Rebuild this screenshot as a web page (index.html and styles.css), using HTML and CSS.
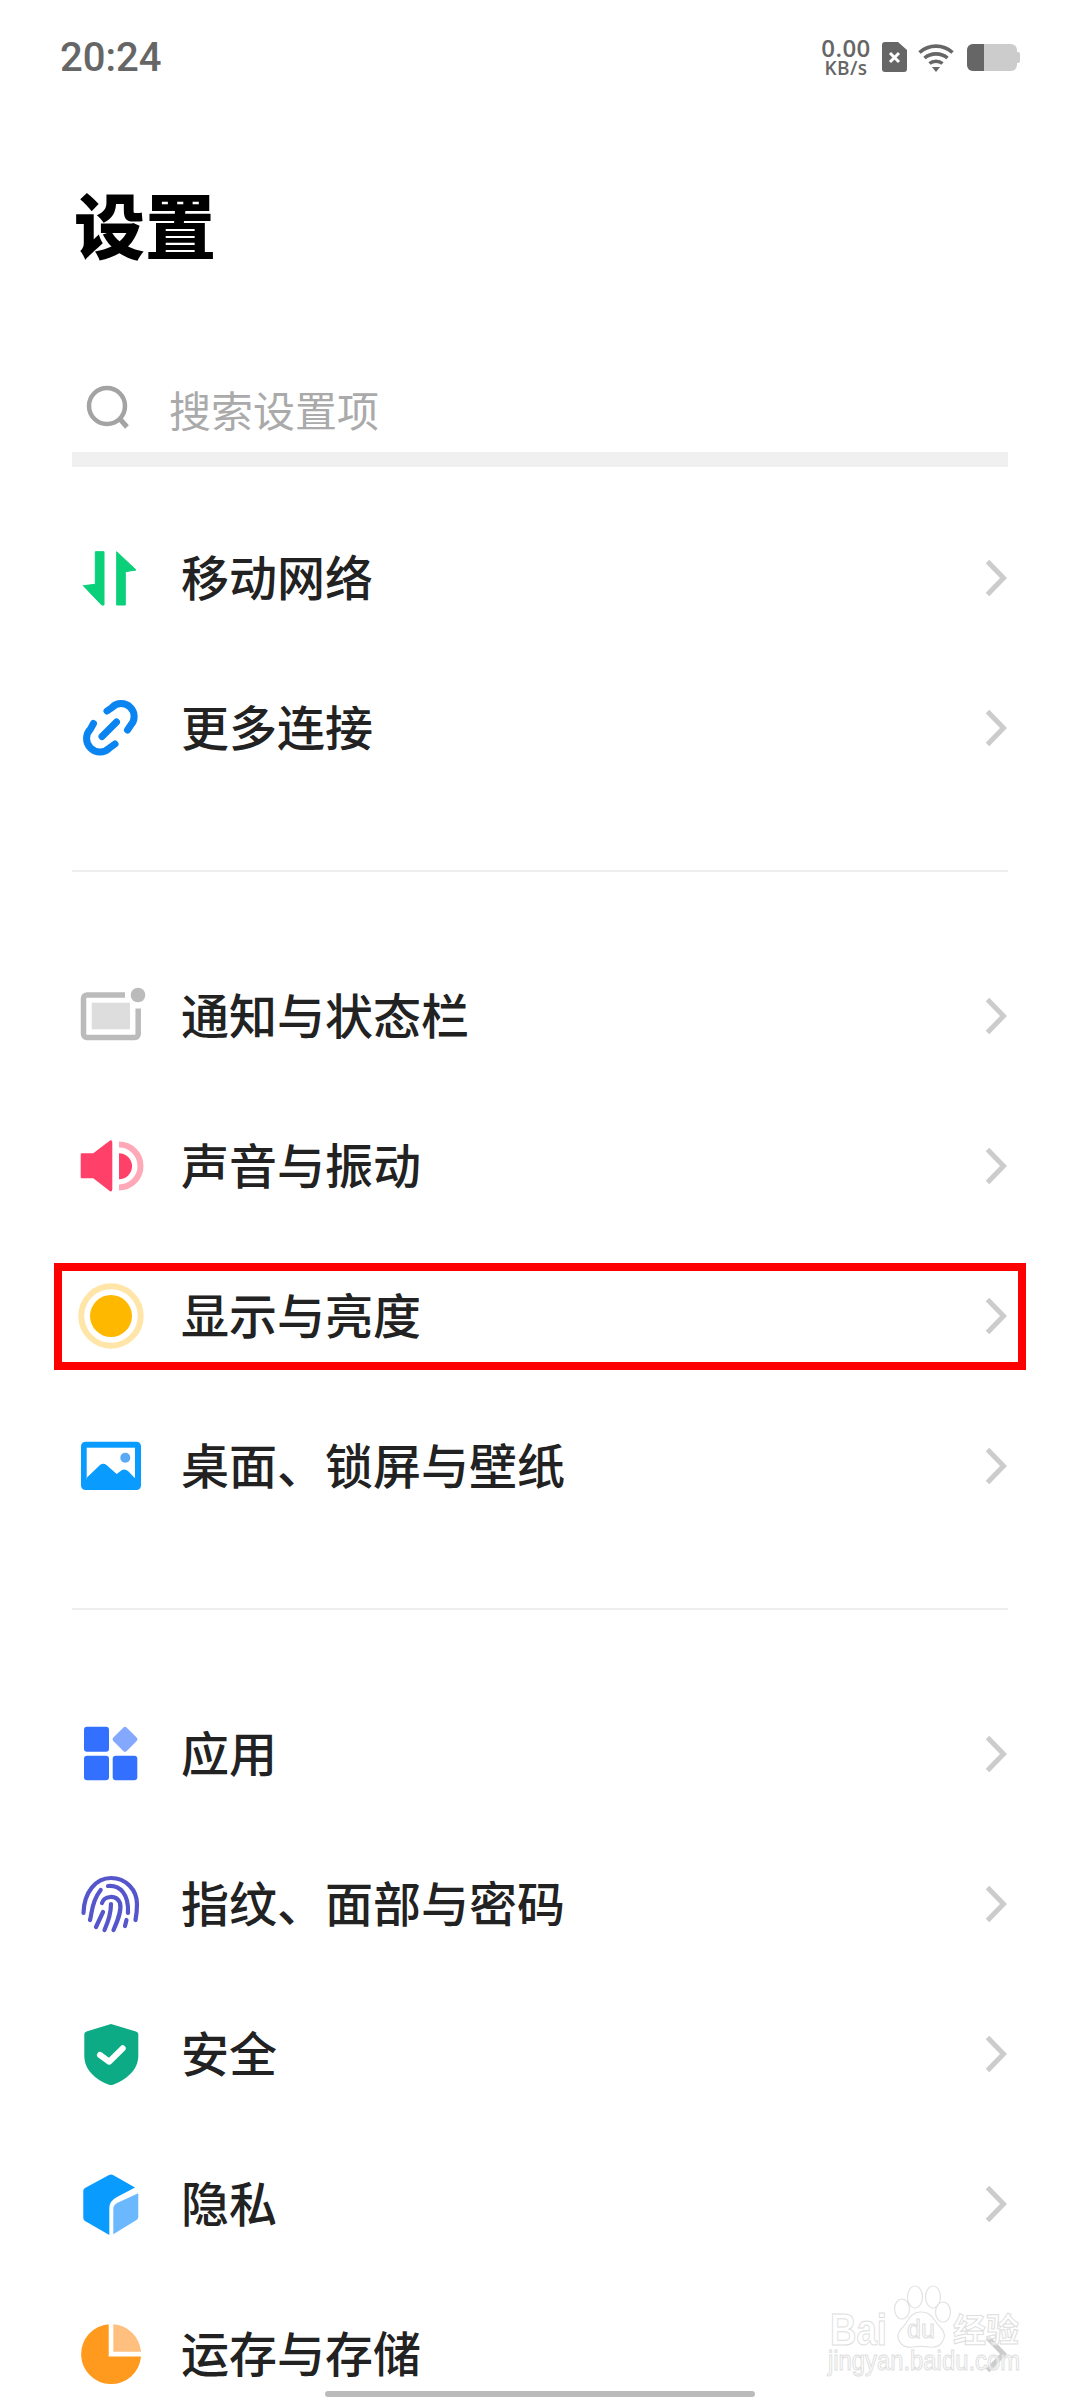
FILE: index.html
```html
<!DOCTYPE html>
<html lang="zh-CN">
<head>
  <meta charset="UTF-8" />
  <meta name="viewport" content="width=device-width, initial-scale=1.0" />
  <title>设置</title>
  <link rel="stylesheet" href="styles.css">
</head>
<body>
  <div class="status">
    <span class="clock">20:24</span>
    <div class="status-icons">
      <div class="speed"><span class="speed-num">0.00</span><span class="speed-unit">KB/s</span></div>
      <svg class="sim" viewBox="0 0 25 30"><path d="M3 0h13l9 8v19a3 3 0 0 1-3 3H3a3 3 0 0 1-3-3V3a3 3 0 0 1 3-3z" fill="#666"/><path d="M8 11l9 9M17 11l-9 9" stroke="#fff" stroke-width="3" fill="none"/></svg>
      <svg class="wifi" viewBox="0 0 36 29"><g fill="none" stroke="#666" stroke-width="3.6"><path d="M1.5 9.5C11 1 25 1 34.5 9.5"/><path d="M6.5 15C13 9.5 23 9.5 29.5 15"/><path d="M11.5 20.5C15 17.5 21 17.5 24.5 20.5"/></g><path d="M14 24h8l-4 5z" fill="#666"/></svg>
      <div class="battery"><div class="battery-fill"></div></div>
    </div>
  </div>

  <h1 class="title">设置</h1>

  <div class="search">
    <svg class="search-icon" viewBox="0 0 46 46"><circle cx="21" cy="21" r="18" fill="none" stroke="#a3a3a3" stroke-width="4.5"/><path d="M33 33l8 9" stroke="#a3a3a3" stroke-width="5" fill="none"/></svg>
    <span>搜索设置项</span>
  </div>

  <div class="group first">
    <div class="row">
      <svg class="icon" viewBox="0 -1 62 62"><path d="M3.3 37.7L15.3 36.3V3.7H24V57H21.7zM36.7 3.7L56 22L45.3 23.7V57H36.7z" fill="#0bd07a" stroke="#0bd07a" stroke-width="1" stroke-linejoin="round"/></svg>
      <span class="label">移动网络</span>
      <svg class="chev" viewBox="0 0 22 38"><path d="M2.5 2.5L18.5 19L2.5 35.5" /></svg>
    </div>
    <div class="row">
      <svg class="icon" viewBox="0 -1 62 62"><g fill="none" stroke="#0a84f0" stroke-width="7" stroke-linecap="round"><path d="M27 13L32 9.5A12.8 12.8 0 0 1 50.5 27.5L47.5 32"/><path d="M13.5 25.5L10.5 31A12.8 12.8 0 0 0 29.5 50L35 46"/><path d="M22 38.5L36.5 24"/></g></svg>
      <span class="label">更多连接</span>
      <svg class="chev" viewBox="0 0 22 38"><path d="M2.5 2.5L18.5 19L2.5 35.5" /></svg>
    </div>
  </div>

  <div class="divider"></div>

  <div class="group">
    <div class="row">
      <svg class="icon" viewBox="0 -1 62 62"><path d="M45 9H7a3.5 3.5 0 0 0-3.5 3.5V48a3.5 3.5 0 0 0 3.5 3.5H54.7a3.5 3.5 0 0 0 3.5-3.5V22.5" fill="none" stroke="#bbb" stroke-width="5.5"/><rect x="11.7" y="16.7" width="38.3" height="26.6" fill="#ddd"/><circle cx="58" cy="9" r="7.3" fill="#bbb"/></svg>
      <span class="label">通知与状态栏</span>
      <svg class="chev" viewBox="0 0 22 38"><path d="M2.5 2.5L18.5 19L2.5 35.5" /></svg>
    </div>
    <div class="row">
      <svg class="icon" viewBox="0 -1 62 62"><path d="M1.7 17.3H13.3L30 4.5Q32.3 3.8 32.3 6.5V53Q32.3 56.2 30 55.2L13.3 42.3H1.7a1 1 0 0 1-1-1V18.3a1 1 0 0 1 1-1z" fill="#ff4068"/><path d="M39 17.3A13 13 0 0 1 39 43.3z" fill="#ff4068"/><path d="M39 8.5A21.5 21.5 0 0 1 39 51.5" fill="none" stroke="#ffa8b8" stroke-width="6"/></svg>
      <span class="label">声音与振动</span>
      <svg class="chev" viewBox="0 0 22 38"><path d="M2.5 2.5L18.5 19L2.5 35.5" /></svg>
    </div>
    <div class="row marked">
      <svg class="icon" viewBox="0 -1 62 62"><circle cx="31" cy="30" r="29.7" fill="none" stroke="#ffe6a8" stroke-width="6"/><circle cx="31" cy="30" r="21" fill="#ffb800"/></svg>
      <span class="label">显示与亮度</span>
      <svg class="chev" viewBox="0 0 22 38"><path d="M2.5 2.5L18.5 19L2.5 35.5" /></svg>
    </div>
    <div class="row">
      <svg class="icon" viewBox="0 -1 62 62"><rect x="1" y="5.7" width="60" height="48.3" rx="4.5" fill="#0a9bff"/><rect x="6.7" y="11.7" width="48.3" height="32" fill="#fff"/><path d="M6.7 41.7L20 29Q23.3 26.5 26.5 29L36.7 38L42 34Q45 32.5 48 35L55 42.3V46H6.7z" fill="#0a9bff"/><circle cx="45.3" cy="21.7" r="5" fill="#5aa9f5"/></svg>
      <span class="label">桌面、锁屏与壁纸</span>
      <svg class="chev" viewBox="0 0 22 38"><path d="M2.5 2.5L18.5 19L2.5 35.5" /></svg>
    </div>
  </div>

  <div class="divider"></div>

  <div class="group">
    <div class="row">
      <svg class="icon" viewBox="0 -1 62 62"><g fill="#3370ff"><rect x="4" y="2.7" width="25" height="25" rx="3"/><rect x="4" y="31.7" width="25" height="24.5" rx="3"/><rect x="32.7" y="31.7" width="24.6" height="24.5" rx="3"/></g><rect x="35.5" y="5.8" width="19" height="19" rx="2.5" transform="rotate(45 45 15.3)" fill="#85a8ff"/></svg>
      <span class="label">应用</span>
      <svg class="chev" viewBox="0 0 22 38"><path d="M2.5 2.5L18.5 19L2.5 35.5" /></svg>
    </div>
    <div class="row">
      <svg class="icon" viewBox="0 -1 62 62"><g fill="none" stroke="#5555cc" stroke-width="4.2" stroke-linecap="round"><path d="M3.5 39C4 18 16 4 31 4C46 4 57 16 57 30C57 36 56.5 41 55.5 46"/><path d="M10 46C12 40 11 28 20.7 16"/><path d="M28 12C40 11 49 20 48 39"/><path d="M16 53L23 38"/><path d="M22 29C24 22 36 20 40 29C42 37 37 48 33.5 56"/><path d="M31 30C31 40 28 48 24.5 56"/><path d="M46.5 46L45 52"/></g></svg>
      <span class="label">指纹、面部与密码</span>
      <svg class="chev" viewBox="0 0 22 38"><path d="M2.5 2.5L18.5 19L2.5 35.5" /></svg>
    </div>
    <div class="row">
      <svg class="icon" viewBox="0 -1 62 62"><path d="M31 0L56 7.5Q58.3 8.3 58.3 10.5V32C58.3 46 46 56 33 60.7Q31 61.5 29 60.7C16 56 4.3 46 4.3 32V10.5Q4.3 8.3 6.5 7.5z" fill="#0dab85"/><path d="M20 31L29.3 37.7L42.7 24.3" fill="none" stroke="#fff" stroke-width="6" stroke-linecap="round" stroke-linejoin="round"/></svg>
      <span class="label">安全</span>
      <svg class="chev" viewBox="0 0 22 38"><path d="M2.5 2.5L18.5 19L2.5 35.5" /></svg>
    </div>
    <div class="row">
      <svg class="icon" viewBox="0 -1 62 62"><path d="M29 1Q31 0 33 1L55 13.5L37 23Q29.3 27 29.3 34V61L5 47Q3.3 46 3.3 44V16.5Q3.3 15 5 14z" fill="#0a9bff"/><path d="M58.3 19.3V43Q58.3 45 56.5 46L33.3 60.3V35Q33.3 31 37 29z" fill="#6cb8ff"/></svg>
      <span class="label">隐私</span>
      <svg class="chev" viewBox="0 0 22 38"><path d="M2.5 2.5L18.5 19L2.5 35.5" /></svg>
    </div>
    <div class="row">
      <svg class="icon" viewBox="0 -1 62 62"><path d="M28.7 0.2A30 30 0 1 0 61 32.5H28.7z" fill="#ff9a1f"/><path d="M33.3 0.2A30 30 0 0 1 61 27.7H33.3z" fill="#ffc07f"/></svg>
      <span class="label">运存与存储</span>
      <svg class="chev" viewBox="0 0 22 38"><path d="M2.5 2.5L18.5 19L2.5 35.5" /></svg>
    </div>
  </div>

  <div class="home-bar"></div>

  <svg class="watermark" viewBox="0 0 200 75">
    <g class="wm-paw">
      <ellipse cx="87" cy="-3" rx="7.5" ry="11"/>
      <ellipse cx="105" cy="-3" rx="7.5" ry="11"/>
      <ellipse cx="74" cy="9" rx="7.5" ry="10"/>
      <ellipse cx="115" cy="12" rx="7.5" ry="10"/>
      <path d="M93 12C105 12 107 23 113 28C121 37 113 49 101 47C94 46 91 46 85 47C73 49 65 37 74 28C80 23 81 12 93 12z"/>
    </g>
    <text class="wm-text wm-bai" x="2" y="45" textLength="57" lengthAdjust="spacingAndGlyphs">Bai</text>
    <text class="wm-text wm-du" x="79" y="38">du</text>
    <text class="wm-text wm-cn" x="125" y="42">经验</text>
    <text class="wm-text wm-url" x="0" y="70" textLength="192" lengthAdjust="spacingAndGlyphs">jingyan.baidu.com</text>
  </svg>
</body>
</html>
```

FILE: styles.css
```css
html, body {
  margin: 0;
  height: 2400px;
  overflow: hidden;
}

body {
  position: relative;
  background: #fff;
  font-family: "Noto Sans CJK SC", "Noto Sans", sans-serif;
  color: #222;
}

/* status bar */
.status {
  height: 114px;
  padding: 0 60px 0 60px;
  box-sizing: border-box;
  display: flex;
  align-items: center;
  justify-content: space-between;
}

.clock {
  font-family: Roboto, sans-serif;
  font-size: 40px;
  font-weight: 500;
  color: #666;
}

.status-icons {
  display: flex;
  align-items: center;
  height: 40px;
}

.speed {
  width: 50px;
  text-align: center;
  color: #666;
  font-family: "Open Sans", sans-serif;
  font-weight: 600;
  letter-spacing: 0.4px;
}

.speed-num {
  display: block;
  font-size: 24px;
  line-height: 22px;
}

.speed-unit {
  display: block;
  font-size: 19px;
  line-height: 18px;
}

.sim {
  width: 25px;
  height: 30px;
  margin-left: 11px;
}

.wifi {
  width: 36px;
  height: 29px;
  margin-left: 11px;
}

.battery {
  width: 50px;
  height: 27px;
  margin-left: 13px;
  margin-right: 3px;
  border-radius: 6px;
  background: #ccc;
  position: relative;
}

.battery::after {
  content: "";
  position: absolute;
  right: -3px;
  top: 8px;
  width: 3px;
  height: 11px;
  background: #ccc;
  border-radius: 0 2px 2px 0;
}

.battery-fill {
  width: 17px;
  height: 100%;
  background: #666;
  border-radius: 6px 0 0 6px;
}

/* header */
.title {
  margin: 73px 0 0 74px;
  font-size: 71px;
  line-height: 70px;
  font-weight: 900;
  color: #000;
}

.search {
  margin: 113px 72px 0 72px;
  height: 82px;
  padding-left: 14px;
  padding-bottom: 6px;
  box-sizing: border-box;
  display: flex;
  align-items: center;
  gap: 37px;
  font-size: 42px;
  color: #aaa;
  box-shadow: 0 15px 0 #f0f0f0;
}

.search-icon {
  width: 46px;
  height: 46px;
}

/* rows */
.group.first {
  margin-top: 51px;
}

.row {
  position: relative;
  height: 150px;
  padding: 0 73px 0 80px;
  display: flex;
  align-items: center;
  gap: 39px;
}

.icon {
  width: 62px;
  height: 62px;
  overflow: visible;
  flex: none;
}

.label {
  flex: 1;
  padding-bottom: 6px;
  font-size: 48px;
  font-weight: 500;
  white-space: nowrap;
}

.chev {
  width: 22px;
  height: 38px;
  flex: none;
}

.chev path {
  fill: none;
  stroke: #ccc;
  stroke-width: 5;
}

/* the red frame drawn over the screenshot */
.marked::after {
  content: "";
  position: absolute;
  top: 22px;
  bottom: 21px;
  left: 54px;
  right: 54px;
  border: 8px solid #f00;
}

.divider {
  height: 2px;
  background: #eee;
  margin: 67px 72px 69px 72px;
}

.home-bar {
  position: absolute;
  left: 325px;
  top: 2391px;
  width: 430px;
  height: 6px;
  border-radius: 3px;
  background: #bbb;
}

.watermark {
  position: absolute;
  left: 828px;
  top: 2300px;
  width: 200px;
  height: 75px;
  overflow: visible;
}

.wm-paw {
  fill: rgba(255, 255, 255, 0.6);
  stroke: #e2e2e2;
  stroke-width: 1.2;
}

.wm-text {
  fill: rgba(255, 255, 255, 0.6);
  stroke: #dedede;
  stroke-width: 1;
  font-family: "Liberation Sans", sans-serif;
}

.wm-bai {
  font-size: 44px;
  font-weight: 700;
}

.wm-du {
  font-size: 25px;
}

.wm-cn {
  font-family: "Noto Sans CJK SC", sans-serif;
  font-size: 33px;
  font-weight: 700;
}

.wm-url {
  font-size: 27px;
}
```
